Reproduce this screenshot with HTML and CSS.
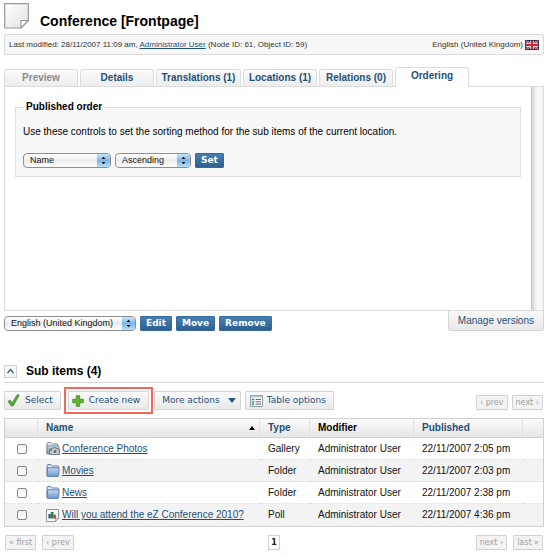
FILE: index.html
```html
<!DOCTYPE html>
<html lang="en">
<head>
<meta charset="utf-8">
<title>Conference [Frontpage]</title>
<link rel="stylesheet" href="styles.css">
</head>
<body>
<svg width="0" height="0" class="defs" aria-hidden="true">
  <defs>
    <linearGradient id="paper" x1="0" y1="0" x2="1" y2="1"><stop offset="0" stop-color="#fff"/><stop offset="1" stop-color="#e2e2e2"/></linearGradient>
    <linearGradient id="blue" x1="0" y1="0" x2="0" y2="1"><stop offset="0" stop-color="#c3d8f2"/><stop offset="1" stop-color="#6d97cf"/></linearGradient>
    <linearGradient id="grey" x1="0" y1="0" x2="0" y2="1"><stop offset="0" stop-color="#c4d8ea"/><stop offset="1" stop-color="#7f93a8"/></linearGradient>
    <symbol id="folder" viewBox="0 0 14 13">
      <path d="M1 11.5V1.5Q1 .6 2 .6H5L6.4 2H11.5Q12.3 2 12.3 3V5" fill="#dce8f6" stroke="#5b7cab"/>
      <path d="M1 11.7L1.6 3.8H13.2L12.6 11.7Q12.5 12.4 11.8 12.4H1.7Q1 12.4 1 11.7Z" fill="url(#blue)" stroke="#4a6c9c" stroke-width=".8"/>
    </symbol>
  </defs>
</svg>
<main>
  <header class="title">
    <svg width="26" height="26" viewBox="0 0 26 26" aria-hidden="true">
      <path d="M.7 .7H24.3V17.5L17 25H.7Z" fill="url(#paper)" stroke="#9a9a9a" stroke-width="1.2"/>
      <path d="M24.3 17.5H17V25Z" fill="#fff" stroke="#9a9a9a" stroke-width="1.2"/>
    </svg>
    <h1>Conference [Frontpage]</h1>
  </header>

  <div class="info">
    <span>Last modified: 28/11/2007 11:09 am, <a href="#user">Administrator User</a> (Node ID: 61, Object ID: 59)</span>
    <span class="lang">English (United Kingdom)
      <svg width="14" height="10" viewBox="0 0 14 10" aria-hidden="true">
        <path d="M0 0H14V10H0Z" fill="#20264f"/>
        <path d="M0 0L14 10M14 0L0 10" stroke="#e9c9d0" stroke-width="2"/>
        <path d="M0 0L14 10M14 0L0 10" stroke="#c8293c"/>
        <path d="M7 0V10M0 5H14" stroke="#fff" stroke-width="3.4"/>
        <path d="M7 0V10M0 5H14" stroke="#d8232f" stroke-width="2"/>
        <path d="M.5 .5H13.5V9.5H.5Z" fill="none" stroke="#20264f" stroke-opacity=".7"/>
      </svg>
    </span>
  </div>

  <nav class="tabs">
    <a class="off" href="#preview">Preview</a>
    <a href="#details">Details</a>
    <a class="wide" href="#translations">Translations (1)</a>
    <a href="#locations">Locations (1)</a>
    <a href="#relations">Relations (0)</a>
    <a class="active" href="#ordering">Ordering</a>
  </nav>
  <section class="panel">
    <div class="content">
      <fieldset>
        <legend>Published order</legend>
        <p>Use these controls to set the sorting method for the sub items of the current location.</p>
        <div class="row">
          <span class="pick field"><select aria-label="Sort field"><option>Name</option></select><svg class="arrows" viewBox="0 0 14 13" aria-hidden="true"><path d="M5 5L7 2.4L9 5ZM5 8L7 10.6L9 8Z"/></svg></span>
          <span class="pick order"><select aria-label="Sort direction"><option>Ascending</option></select><svg class="arrows" viewBox="0 0 14 13" aria-hidden="true"><path d="M5 5L7 2.4L9 5ZM5 8L7 10.6L9 8Z"/></svg></span>
          <button class="primary">Set</button>
        </div>
      </fieldset>
    </div>
    <div class="track"></div>
  </section>

  <div class="controls">
    <div class="row">
      <span class="pick locale"><select aria-label="Language"><option>English (United Kingdom)</option></select><svg class="arrows" viewBox="0 0 14 13" aria-hidden="true"><path d="M5 5L7 2.4L9 5ZM5 8L7 10.6L9 8Z"/></svg></span>
      <button class="primary">Edit</button>
      <button class="primary">Move</button>
      <button class="primary">Remove</button>
    </div>
    <a class="versions" href="#versions">Manage versions</a>
  </div>

  <div class="subhead">
    <button class="toggle" aria-label="Collapse sub items"><svg width="9" height="6" viewBox="0 0 9 6" aria-hidden="true"><path d="M1.5 5L4.5 1.5L7.5 5" fill="none" stroke="#2d5a82" stroke-width="1.2"/></svg></button>
    <h2>Sub items (4)</h2>
  </div>

  <div class="toolbar">
    <button class="tool select"><svg width="13" height="13" viewBox="0 0 13 13" aria-hidden="true"><path d="M1 7.5L3 6L5 8.8L10.3 .8L12.3 1.2L6 12H4.2Z" fill="#5cad2f" stroke="#35791c" stroke-width=".7"/></svg>Select</button>
    <span class="mark"><button class="tool create"><svg width="12" height="12" viewBox="0 0 12 12" aria-hidden="true"><path d="M4.3 .7H7.7V4.3H11.3V7.7H7.7V11.3H4.3V7.7H.7V4.3H4.3Z" fill="#62b52e" stroke="#3c8a1e" stroke-width=".8"/></svg>Create new</button></span>
    <button class="tool more">More actions<svg width="8" height="5" viewBox="0 0 8 5" aria-hidden="true"><path d="M0 0H8L4 5Z" fill="#2b5783"/></svg></button>
    <button class="tool options"><svg width="13" height="12" viewBox="0 0 13 12" aria-hidden="true"><path d="M.5 .5H12.5V11.5H.5Z" fill="#fff" stroke="#8fa3ae"/><path d="M1 1H12V2.5H1Z" fill="#b9cbd4"/><path d="M1 2.5H4.5V11H1Z" fill="#d7e5e8"/><path d="M2 4.5H4M2 6.8H4M2 9.1H4" stroke="#2f8a4b" stroke-width="1.2"/><path d="M5.5 4.5H11M5.5 6.8H11M5.5 9.1H11" stroke="#557" stroke-width=".9"/></svg>Table options</button>
    <span class="pages"><button class="page" disabled>‹ prev</button><button class="page" disabled>next ›</button></span>
  </div>

  <table>
    <colgroup><col class="c-check"><col><col class="c-type"><col class="c-mod"><col class="c-pub"><col class="c-end"></colgroup>
    <thead>
      <tr><th></th><th><div class="sorted"><a href="#name">Name</a><svg width="6" height="4" viewBox="0 0 6 4" aria-hidden="true"><path d="M0 4L3 0L6 4Z"/></svg></div></th><th><a href="#type">Type</a></th><th>Modifier</th><th><a href="#published">Published</a></th><th></th></tr>
    </thead>
    <tbody>
      <tr><td><input type="checkbox" aria-label="Conference Photos"></td>
        <td><div class="item"><svg width="14" height="13" viewBox="0 0 14 13" aria-hidden="true"><path d="M1 11.5V1.5Q1 .6 2 .6H5L6.4 2H11.5V5" fill="#e6edf3" stroke="#7b8c9c"/><path d="M1 12V3.8H12.8V12Z" fill="url(#grey)" stroke="#6f8294" stroke-width=".8"/><path d="M3.5 7H6L7 5.8H10L11 7H13.5V12.6H3.5Z" fill="#c2c5c8" stroke="#5d646b" stroke-width=".8"/><circle cx="9" cy="9.6" r="2" fill="#5c6c7c" stroke="#eee" stroke-width=".7"/><path d="M4.5 8.2H6" stroke="#444"/></svg><a href="#photos">Conference Photos</a></div></td>
        <td>Gallery</td><td>Administrator User</td><td>22/11/2007 2:05 pm</td><td></td></tr>
      <tr><td><input type="checkbox" aria-label="Movies"></td>
        <td><div class="item"><svg width="14" height="13" aria-hidden="true"><use href="#folder"/></svg><a href="#movies">Movies</a></div></td>
        <td>Folder</td><td>Administrator User</td><td>22/11/2007 2:03 pm</td><td></td></tr>
      <tr><td><input type="checkbox" aria-label="News"></td>
        <td><div class="item"><svg width="14" height="13" aria-hidden="true"><use href="#folder"/></svg><a href="#news">News</a></div></td>
        <td>Folder</td><td>Administrator User</td><td>22/11/2007 2:38 pm</td><td></td></tr>
      <tr><td><input type="checkbox" aria-label="Will you attend the eZ Conference 2010?"></td>
        <td><div class="item"><svg width="14" height="13" viewBox="0 0 14 13" aria-hidden="true"><path d="M.5 .5H12.5V9L9.5 12.5H.5Z" fill="#fafafa" stroke="#8b949b"/><path d="M12.5 9H9.5V12.5Z" fill="#ddd" stroke="#8b949b" stroke-width=".7"/><path d="M2.4 5H4.8V9.5H2.4Z" fill="#2d5f95"/><path d="M4.8 3H7.4V9.5H4.8Z" fill="#25804a"/><path d="M7.4 5.5H9.8V9.5H7.4Z" fill="#b23a35"/></svg><a href="#poll">Will you attend the eZ Conference 2010?</a></div></td>
        <td>Poll</td><td>Administrator User</td><td>22/11/2007 4:36 pm</td><td></td></tr>
    </tbody>
  </table>

  <div class="pager">
    <span class="group"><button class="page" disabled>« first</button><button class="page" disabled>‹ prev</button></span>
    <a class="current" href="#page-1">1</a>
    <span class="group end"><button class="page" disabled>next ›</button><button class="page" disabled>last »</button></span>
  </div>
</main>
</body>
</html>
```
FILE: styles.css
```css
* { box-sizing: border-box; }
body {
  margin: 0;
  background: #fff;
  color: #111;
  font: 10px/14px "Liberation Sans", Arial, sans-serif;
}
.defs { position: absolute; }
main { padding: 3px 6px 8px 4px; }
svg { display: block; flex: none; }
a { color: #1e5078; }
h1, h2, p { margin: 0; color: #000; }
button, select, input { margin: 0; font: inherit; }

.title { display: flex; gap: 10px; height: 31px; }
h1 { padding-top: 8px; font-size: 14px; line-height: 20px; }

.info {
  display: flex;
  justify-content: space-between;
  align-items: center;
  height: 21px;
  padding: 0 4px;
  border: 1px solid #dcdcdc;
  border-radius: 2px;
  background: #f7f7f7;
  color: #333;
  font-size: 8px;
  white-space: nowrap;
}
.lang { display: flex; align-items: center; gap: 2px; }

.tabs { display: flex; align-items: flex-end; gap: 2px; margin-top: 12px; }
.tabs a {
  width: 74px;
  height: 17px;
  border: 1px solid #dcdcdc;
  border-bottom: 0;
  border-radius: 3px 3px 0 0;
  background: linear-gradient(#fafafa, #ededed);
  font-weight: bold;
  line-height: 16px;
  text-align: center;
  text-decoration: none;
  white-space: nowrap;
}
.tabs .wide { width: 85px; }
.tabs .off { color: #8c8c8c; }
.tabs .active { position: relative; height: 20px; margin-bottom: -1px; background: #fff; }

.panel { display: flex; border: 1px solid #dcdcdc; }
.content { flex: 1; min-height: 223px; padding: 13px 10px 0; }
.track { width: 12px; background: linear-gradient(90deg, #c2c2c2, #e6e6e6 25%, #fafafa 60%, #f2f2f2); }
fieldset {
  margin: 0;
  padding: 11px 7px 8px;
  border: 1px solid #dcdcdc;
  background: #f8f8f8;
}
legend { padding: 0 3px; color: #000; font-weight: bold; line-height: 14px; }
.row { display: flex; align-items: center; gap: 4px; }
fieldset .row { margin-top: 14px; }

.pick { position: relative; display: block; }
.pick select {
  display: block;
  width: 100%;
  height: 15px;
  padding: 0 14px 0 6px;
  appearance: none;
  border: 1px solid #8f8f8f;
  border-radius: 4px;
  background: linear-gradient(#fff, #ececec 50%, #fdfdfd);
  color: #111;
  font-size: 9px;
  line-height: 13px;
}
.arrows {
  position: absolute;
  top: 1px;
  right: 1px;
  width: 13px;
  height: 13px;
  border-radius: 0 3px 3px 0;
  background: linear-gradient(#c9e2f8, #7db6ea 50%, #b4e0fb);
  pointer-events: none;
}
.field { width: 88px; }
.order { width: 76px; }
.locale { width: 132px; }
.primary {
  height: 15px;
  padding: 0 5px;
  border: 1px solid #376a9a;
  border-radius: 1px;
  background: linear-gradient(#4580b3, #2d5f92);
  color: #fff;
  font: bold 9px/13px "DejaVu Sans", sans-serif;
}

.controls { display: flex; justify-content: space-between; align-items: flex-start; }
.controls .row { padding-top: 5px; }
.versions {
  height: 20px;
  padding: 0 9px;
  border: 1px solid #d4d4d4;
  border-top: 0;
  border-radius: 0 0 3px 3px;
  background: linear-gradient(#f8f8f8, #e8e8e8);
  line-height: 20px;
  text-decoration: none;
}

.subhead {
  display: flex;
  align-items: center;
  gap: 9px;
  margin-top: 31px;
  padding-bottom: 2px;
  border-bottom: 1px solid #d8d8d8;
}
h2 { font-size: 12px; line-height: 18px; }
.toggle {
  display: grid;
  place-items: center;
  width: 13px;
  height: 13px;
  padding: 0;
  border: 1px solid #cfcfcf;
  background: #f6f6f6;
}

.toolbar { display: flex; align-items: center; height: 35px; }
.tool {
  display: flex;
  align-items: center;
  gap: 5px;
  height: 19px;
  padding: 0 7px;
  border: 1px solid #d4d4d4;
  border-radius: 1px;
  background: linear-gradient(#fafafa, #e9e9e9);
  color: #1e5078;
  font: 9px/17px "DejaVu Sans", sans-serif;
  white-space: nowrap;
}
.select { padding: 0 7px 0 2px; }
.mark { margin: 0 1px 0 3px; padding: 2px; border: 2px solid #f2665c; }
.create { padding: 0 8px 0 3px; }
.more { gap: 8px; margin-right: 4px; padding: 0 4px 0 7px; }
.options { padding: 0 7px 0 4px; gap: 4px; }
.pages, .group { display: flex; gap: 4px; }
.pages { margin-left: auto; padding: 3px 1px 0 0; }
.page {
  height: 15px;
  padding: 0 3px;
  border: 1px solid #d0d0d0;
  border-radius: 1px;
  background: #f3f3f3;
  color: #a0a0a0;
  font: 8px/13px "DejaVu Sans", sans-serif;
}

table {
  width: 100%;
  table-layout: fixed;
  border: 1px solid #d0d0d0;
  border-spacing: 0;
}
.c-check { width: 33px; }
.c-type { width: 50px; }
.c-mod { width: 104px; }
.c-pub { width: 109px; }
.c-end { width: 20px; }
th, td { padding: 0 0 0 8px; text-align: left; white-space: nowrap; }
th {
  height: 19px;
  border-right: 1px dotted #d0d0d0;
  border-bottom: 1px solid #d0d0d0;
  background: linear-gradient(#fafafa, #e6e6e6);
  color: #000;
}
th:last-child { border-right: 0; }
th a { text-decoration: none; }
td { height: 22px; border-bottom: 1px dotted #d8d8d8; }
tbody tr:last-child td { border-bottom: 0; }
tbody tr:nth-child(even) { background: #f3f3f3; }
.sorted { display: flex; align-items: center; justify-content: space-between; padding-right: 4px; }
.item { display: flex; align-items: center; gap: 2px; }
td:first-child { padding-left: 12px; }
input[type="checkbox"] {
  display: block;
  width: 10px;
  height: 10px;
  appearance: none;
  border: 1px solid #888;
  border-radius: 2px;
  background: linear-gradient(#f0f0f0, #fff);
}

.pager { display: flex; align-items: center; padding: 8px 1px 0; }
.group { flex: 1; gap: 6px; }
.end { justify-content: flex-end; }
.current {
  width: 12px;
  height: 15px;
  border: 1px solid #d0d0d0;
  color: #222;
  font: bold 8px/13px "DejaVu Sans", sans-serif;
  text-align: center;
  text-decoration: none;
}
```
